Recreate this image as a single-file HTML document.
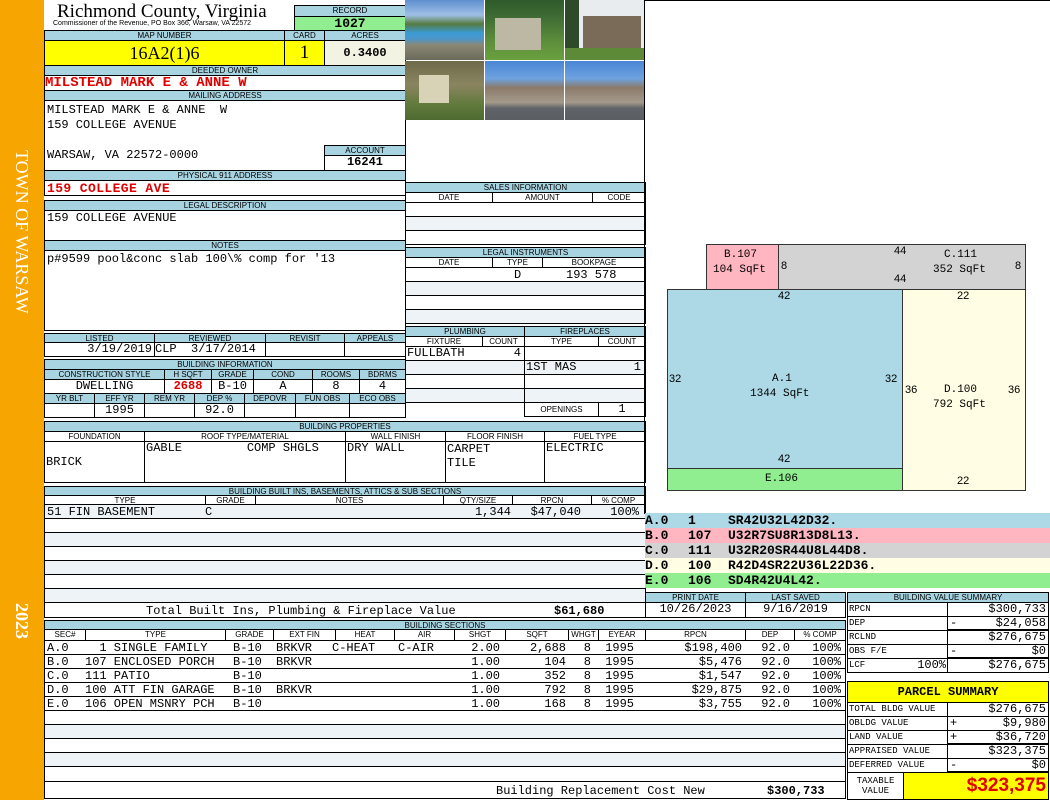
<!DOCTYPE html>
<html><head><meta charset="utf-8">
<style>
*{margin:0;padding:0}
body{width:1050px;height:800px;position:relative;background:#fff;overflow:hidden;font-family:"Liberation Sans",sans-serif}
.b{position:absolute;box-sizing:border-box;border:1px solid #000;overflow:hidden;white-space:nowrap}
.h{background:#a8d4e2;font:8px/9px "Liberation Sans",sans-serif;text-align:center;color:#000}
.v{font:12px/13px "Liberation Mono",monospace;background:#fff;padding:0 2px}
.s{background:#eef3f7}
.c{text-align:center}.r{text-align:right}
.red{color:#e00000}
.a{position:absolute;white-space:pre}
.m{font:12px/13px "Liberation Mono",monospace}
.bd{font-weight:bold !important}
.sk{font:11px "Liberation Mono",monospace;position:absolute;white-space:nowrap}
.d{font:11px "Liberation Sans",sans-serif;position:absolute;color:#000}
.row span{position:absolute;top:1px;font:12px/13px "Liberation Mono",monospace;white-space:pre}
</style></head><body>
<div style="position:absolute;left:0;top:0;width:44px;height:800px;background:#f7a500"></div>
<div class="a" style="left:10px;top:150px;transform-origin:0 0;transform:translate(22px,0) rotate(90deg);font:18px 'Liberation Serif',serif;color:#fff">TOWN OF WARSAW</div>
<div class="a" style="left:10px;top:603px;transform-origin:0 0;transform:translate(22px,0) rotate(90deg);font:bold 18px 'Liberation Serif',serif;color:#fff">2023</div>

<div class="a" style="left:57px;top:1px;font:19px/22px 'Liberation Serif',serif">Richmond County, Virginia</div>
<div class="a" style="left:53px;top:20px;font:7px/8px 'Liberation Sans',sans-serif">Commissioner of the Revenue, PO Box 366, Warsaw, VA 22572</div>

<div class="b h" style="left:294px;top:5px;width:112px;height:12px">RECORD</div>
<div class="b v c bd" style="left:294px;top:16px;width:112px;height:15px;background:#90ee90;font-size:13px">1027</div>
<div class="b h" style="left:44px;top:30px;width:241px;height:11px">MAP NUMBER</div>
<div class="b h" style="left:284px;top:30px;width:41px;height:11px">CARD</div>
<div class="b h" style="left:324px;top:30px;width:82px;height:11px">ACRES</div>
<div class="b c" style="left:44px;top:40px;width:241px;height:26px;background:#ffff00;font:18px/24px 'Liberation Serif',serif">16A2(1)6</div>
<div class="b c" style="left:284px;top:40px;width:41px;height:26px;background:#ffff00;font:19px/24px 'Liberation Serif',serif">1</div>
<div class="b v c bd" style="left:324px;top:40px;width:82px;height:26px;background:#f3f3e4;line-height:24px">0.3400</div>

<div class="b h" style="left:44px;top:65px;width:362px;height:11px">DEEDED OWNER</div>
<div class="b v bd red" style="left:44px;top:75px;width:362px;height:16px;padding:0;font-size:14px;line-height:15px">MILSTEAD MARK E &amp; ANNE W</div>
<div class="b h" style="left:44px;top:90px;width:362px;height:11px">MAILING ADDRESS</div>
<div class="b v" style="left:44px;top:100px;width:362px;height:71px;line-height:15px;padding-top:2px;white-space:pre">MILSTEAD MARK E &amp; ANNE  W
159 COLLEGE AVENUE

WARSAW, VA 22572-0000</div>
<div class="b h" style="left:324px;top:145px;width:82px;height:11px">ACCOUNT</div>
<div class="b v c bd" style="left:324px;top:155px;width:82px;height:16px">16241</div>
<div class="b h" style="left:44px;top:170px;width:362px;height:11px">PHYSICAL 911 ADDRESS</div>
<div class="b v bd red" style="left:44px;top:180px;width:362px;height:16px;font-size:13px;letter-spacing:0.4px;line-height:15px">159 COLLEGE AVE</div>
<div class="b h" style="left:44px;top:200px;width:362px;height:11px">LEGAL DESCRIPTION</div>
<div class="b v" style="left:44px;top:210px;width:362px;height:31px;padding-top:1px">159 COLLEGE AVENUE</div>
<div class="b h" style="left:44px;top:240px;width:362px;height:11px">NOTES</div>
<div class="b v" style="left:44px;top:250px;width:362px;height:81px;padding-top:2px">p#9599 pool&amp;conc slab 100\% comp for '13</div>

<div class="b h" style="left:44px;top:333px;width:111px;height:10px">LISTED</div>
<div class="b h" style="left:154px;top:333px;width:112px;height:10px">REVIEWED</div>
<div class="b h" style="left:265px;top:333px;width:80px;height:10px">REVISIT</div>
<div class="b h" style="left:344px;top:333px;width:62px;height:10px">APPEALS</div>
<div class="b v r" style="left:44px;top:342px;width:111px;height:15px">3/19/2019</div>
<div class="b v" style="left:154px;top:342px;width:112px;height:15px;white-space:pre;padding:0">CLP  3/17/2014</div>
<div class="b v" style="left:265px;top:342px;width:80px;height:15px"></div>
<div class="b v" style="left:344px;top:342px;width:62px;height:15px"></div>

<div class="b h" style="left:44px;top:359px;width:362px;height:11px">BUILDING INFORMATION</div>
<div class="b h" style="left:44px;top:369px;width:121px;height:11px">CONSTRUCTION STYLE</div>
<div class="b h" style="left:164px;top:369px;width:48px;height:11px">H SQFT</div>
<div class="b h" style="left:211px;top:369px;width:43px;height:11px">GRADE</div>
<div class="b h" style="left:253px;top:369px;width:60px;height:11px">COND</div>
<div class="b h" style="left:312px;top:369px;width:48px;height:11px">ROOMS</div>
<div class="b h" style="left:359px;top:369px;width:47px;height:11px">BDRMS</div>
<div class="b v c" style="left:44px;top:379px;width:121px;height:15px">DWELLING</div>
<div class="b v c bd red" style="left:164px;top:379px;width:48px;height:15px">2688</div>
<div class="b v c" style="left:211px;top:379px;width:43px;height:15px;padding:0">B-10</div>
<div class="b v c" style="left:253px;top:379px;width:60px;height:15px">A</div>
<div class="b v c" style="left:312px;top:379px;width:48px;height:15px">8</div>
<div class="b v c" style="left:359px;top:379px;width:47px;height:15px">4</div>
<div class="b h" style="left:44px;top:393px;width:51px;height:11px">YR BLT</div>
<div class="b h" style="left:94px;top:393px;width:51px;height:11px">EFF YR</div>
<div class="b h" style="left:144px;top:393px;width:51px;height:11px">REM YR</div>
<div class="b h" style="left:194px;top:393px;width:51px;height:11px">DEP %</div>
<div class="b h" style="left:244px;top:393px;width:52px;height:11px">DEPOVR</div>
<div class="b h" style="left:295px;top:393px;width:55px;height:11px">FUN OBS</div>
<div class="b h" style="left:349px;top:393px;width:57px;height:11px">ECO OBS</div>
<div class="b v" style="left:44px;top:403px;width:51px;height:15px"></div>
<div class="b v c" style="left:94px;top:403px;width:51px;height:15px">1995</div>
<div class="b v" style="left:144px;top:403px;width:51px;height:15px"></div>
<div class="b v c" style="left:194px;top:403px;width:51px;height:15px">92.0</div>
<div class="b v" style="left:244px;top:403px;width:52px;height:15px"></div>
<div class="b v" style="left:295px;top:403px;width:55px;height:15px"></div>
<div class="b v" style="left:349px;top:403px;width:57px;height:15px"></div>

<div style="position:absolute;left:405px;top:0;width:79px;height:60px;background:linear-gradient(#5f8fd0 0,#9fc0e6 25%,#557a40 40%,#3b9bd6 55%,#4c95c8 65%,#8b8775 75%,#6a6a5a 100%)"></div>
<div style="position:absolute;left:485px;top:0;width:79px;height:60px;background:linear-gradient(#2f5a2a 0,#3f6d34 30%,#5e8f3c 70%,#6aa03f 100%)"><div style="position:absolute;left:10px;top:18px;width:46px;height:32px;background:#bdb8a4"></div></div>
<div style="position:absolute;left:565px;top:0;width:79px;height:60px;background:linear-gradient(90deg,#2e4a2a 0,#2e4a2a 18%,#e8ecef 18%);"><div style="position:absolute;left:18px;top:16px;width:58px;height:34px;background:#7a6a58"></div><div style="position:absolute;left:0;top:48px;width:79px;height:12px;background:#5d8a36"></div></div>
<div style="position:absolute;left:405px;top:61px;width:79px;height:59px;background:linear-gradient(#6d6a4a 0,#8a8460 40%,#5f7a3a 75%,#4f6a30 100%)"><div style="position:absolute;left:14px;top:14px;width:30px;height:28px;background:#d8d2b6"></div></div>
<div style="position:absolute;left:485px;top:61px;width:79px;height:59px;background:linear-gradient(#4a86d4 0,#6ea2e0 30%,#8a7a6a 45%,#a49a8a 70%,#606468 80%,#5a5e62 100%)"></div>
<div style="position:absolute;left:565px;top:61px;width:79px;height:59px;background:linear-gradient(#4a86d4 0,#6ea2e0 30%,#8a7a6a 45%,#a49a8a 70%,#606468 80%,#5a5e62 100%)"></div>

<div class="b h" style="left:405px;top:182px;width:241px;height:11px">SALES INFORMATION</div>
<div class="b h" style="left:405px;top:192px;width:88px;height:11px;background:#fff">DATE</div>
<div class="b h" style="left:492px;top:192px;width:101px;height:11px;background:#fff">AMOUNT</div>
<div class="b h" style="left:592px;top:192px;width:54px;height:11px;background:#fff">CODE</div>
<div class="b v" style="left:405px;top:202px;width:241px;height:15px"></div>
<div class="b v s" style="left:405px;top:216px;width:241px;height:15px"></div>
<div class="b v" style="left:405px;top:230px;width:241px;height:15px"></div>
<div class="b h" style="left:405px;top:247px;width:241px;height:11px">LEGAL INSTRUMENTS</div>
<div class="b h" style="left:405px;top:257px;width:88px;height:11px;background:#fff">DATE</div>
<div class="b h" style="left:492px;top:257px;width:51px;height:11px;background:#fff">TYPE</div>
<div class="b h" style="left:542px;top:257px;width:104px;height:11px;background:#fff">BOOKPAGE</div>
<div class="b v" style="left:405px;top:267px;width:241px;height:15px"><span class="a m" style="left:108px;top:1px">D</span><span class="a m" style="left:160px;top:1px">193 578</span></div>
<div class="b v s" style="left:405px;top:281px;width:241px;height:15px"></div>
<div class="b v" style="left:405px;top:295px;width:241px;height:15px"></div>
<div class="b v s" style="left:405px;top:309px;width:241px;height:15px"></div>

<div class="b h" style="left:405px;top:326px;width:120px;height:11px">PLUMBING</div>
<div class="b h" style="left:524px;top:326px;width:122px;height:11px">FIREPLACES</div>
<div class="b h" style="left:405px;top:336px;width:78px;height:11px;background:#fff">FIXTURE</div>
<div class="b h" style="left:482px;top:336px;width:43px;height:11px;background:#fff">COUNT</div>
<div class="b h" style="left:524px;top:336px;width:75px;height:11px;background:#fff">TYPE</div>
<div class="b h" style="left:598px;top:336px;width:48px;height:11px;background:#fff">COUNT</div>
<div class="b v" style="left:405px;top:346px;width:120px;height:15px;padding:0 3px 0 1px">FULLBATH<span style="float:right">4</span></div>
<div class="b v s" style="left:405px;top:360px;width:120px;height:15px"></div>
<div class="b v" style="left:405px;top:374px;width:120px;height:15px"></div>
<div class="b v s" style="left:405px;top:388px;width:120px;height:15px"></div>
<div class="b v" style="left:524px;top:346px;width:122px;height:15px"></div>
<div class="b v s" style="left:524px;top:360px;width:122px;height:15px;padding:0 4px 0 1px">1ST MAS<span style="float:right">1</span></div>
<div class="b v" style="left:524px;top:374px;width:122px;height:15px"></div>
<div class="b v s" style="left:524px;top:388px;width:122px;height:15px"></div>
<div class="b h" style="left:524px;top:402px;width:75px;height:15px;background:#fff;line-height:13px">OPENINGS</div>
<div class="b v c" style="left:598px;top:402px;width:48px;height:15px">1</div>

<div class="b h" style="left:44px;top:421px;width:602px;height:11px">BUILDING PROPERTIES</div>
<div class="b h" style="left:44px;top:431px;width:101px;height:11px;background:#fff">FOUNDATION</div>
<div class="b h" style="left:144px;top:431px;width:202px;height:11px;background:#fff">ROOF TYPE/MATERIAL</div>
<div class="b h" style="left:345px;top:431px;width:101px;height:11px;background:#fff">WALL FINISH</div>
<div class="b h" style="left:445px;top:431px;width:100px;height:11px;background:#fff">FLOOR FINISH</div>
<div class="b h" style="left:544px;top:431px;width:102px;height:11px;background:#fff">FUEL TYPE</div>
<div class="b v" style="left:44px;top:441px;width:101px;height:42px;padding:14px 1px 0">BRICK</div>
<div class="b v" style="left:144px;top:441px;width:202px;height:42px;padding:0 1px;white-space:pre">GABLE         COMP SHGLS</div>
<div class="b v" style="left:345px;top:441px;width:101px;height:42px;padding:0 1px">DRY WALL</div>
<div class="b v" style="left:445px;top:441px;width:100px;height:42px;padding:0 1px;white-space:pre;line-height:14px">CARPET
TILE</div>
<div class="b v" style="left:544px;top:441px;width:102px;height:42px;padding:0 1px">ELECTRIC</div>

<div class="b h" style="left:44px;top:486px;width:602px;height:10px">BUILDING BUILT INS, BASEMENTS, ATTICS &amp; SUB SECTIONS</div>
<div class="b h" style="left:44px;top:495px;width:162px;height:10px;background:#fff">TYPE</div>
<div class="b h" style="left:205px;top:495px;width:51px;height:10px;background:#fff">GRADE</div>
<div class="b h" style="left:255px;top:495px;width:189px;height:10px;background:#fff">NOTES</div>
<div class="b h" style="left:443px;top:495px;width:70px;height:10px;background:#fff">QTY/SIZE</div>
<div class="b h" style="left:512px;top:495px;width:80px;height:10px;background:#fff">RPCN</div>
<div class="b h" style="left:591px;top:495px;width:55px;height:10px;background:#fff">% COMP</div>
<div class="b v s row" style="left:44px;top:504px;width:602px;height:15px;padding:0"><span style="left:2px">51 FIN BASEMENT</span><span style="left:160px">C</span><span style="right:134px">1,344</span><span style="right:64px">$47,040</span><span style="right:6px">100%</span></div>
<div class="b v" style="left:44px;top:518px;width:602px;height:15px"></div>
<div class="b v s" style="left:44px;top:532px;width:602px;height:15px"></div>
<div class="b v" style="left:44px;top:546px;width:602px;height:15px"></div>
<div class="b v s" style="left:44px;top:560px;width:602px;height:15px"></div>
<div class="b v" style="left:44px;top:574px;width:602px;height:15px"></div>
<div class="b v s" style="left:44px;top:588px;width:602px;height:15px"></div>
<div class="b v row" style="left:44px;top:602px;width:602px;height:16px;padding:0"><span style="left:101px;top:2px">Total Built Ins, Plumbing &amp; Fireplace Value</span><span style="left:509px;top:2px;font-weight:bold">$61,680</span></div>

<div class="b h" style="left:44px;top:620px;width:802px;height:10px">BUILDING SECTIONS</div>
<div class="b h" style="left:44px;top:629px;width:42px;height:12px;background:#fff">SEC#</div>
<div class="b h" style="left:85px;top:629px;width:141px;height:12px;background:#fff">TYPE</div>
<div class="b h" style="left:225px;top:629px;width:49px;height:12px;background:#fff">GRADE</div>
<div class="b h" style="left:273px;top:629px;width:63px;height:12px;background:#fff">EXT FIN</div>
<div class="b h" style="left:335px;top:629px;width:60px;height:12px;background:#fff">HEAT</div>
<div class="b h" style="left:394px;top:629px;width:61px;height:12px;background:#fff">AIR</div>
<div class="b h" style="left:454px;top:629px;width:52px;height:12px;background:#fff">SHGT</div>
<div class="b h" style="left:505px;top:629px;width:64px;height:12px;background:#fff">SQFT</div>
<div class="b h" style="left:568px;top:629px;width:31px;height:12px;background:#fff">WHGT</div>
<div class="b h" style="left:598px;top:629px;width:48px;height:12px;background:#fff">EYEAR</div>
<div class="b h" style="left:645px;top:629px;width:101px;height:12px;background:#fff">RPCN</div>
<div class="b h" style="left:745px;top:629px;width:50px;height:12px;background:#fff">DEP</div>
<div class="b h" style="left:794px;top:629px;width:52px;height:12px;background:#fff">% COMP</div>

<div class="b v row" style="left:44px;top:640px;width:802px;height:15px;padding:0"><span style="left:2px">A.0</span><span style="left:40px">  1 SINGLE FAMILY</span><span style="left:188px">B-10</span><span style="left:231px">BRKVR</span><span style="left:287px">C-HEAT</span><span style="left:353px">C-AIR</span><span style="right:345px">2.00</span><span style="right:279px">2,688</span><span style="right:254px">8</span><span style="right:211px">1995</span><span style="right:103px">$198,400</span><span style="right:55px">92.0</span><span style="right:4px">100%</span></div>
<div class="b v row" style="left:44px;top:654px;width:802px;height:15px;padding:0"><span style="left:2px">B.0</span><span style="left:40px">107 ENCLOSED PORCH</span><span style="left:188px">B-10</span><span style="left:231px">BRKVR</span><span style="right:345px">1.00</span><span style="right:279px">104</span><span style="right:254px">8</span><span style="right:211px">1995</span><span style="right:103px">$5,476</span><span style="right:55px">92.0</span><span style="right:4px">100%</span></div>
<div class="b v row" style="left:44px;top:668px;width:802px;height:15px;padding:0"><span style="left:2px">C.0</span><span style="left:40px">111 PATIO</span><span style="left:188px">B-10</span><span style="right:345px">1.00</span><span style="right:279px">352</span><span style="right:254px">8</span><span style="right:211px">1995</span><span style="right:103px">$1,547</span><span style="right:55px">92.0</span><span style="right:4px">100%</span></div>
<div class="b v row" style="left:44px;top:682px;width:802px;height:15px;padding:0"><span style="left:2px">D.0</span><span style="left:40px">100 ATT FIN GARAGE</span><span style="left:188px">B-10</span><span style="left:231px">BRKVR</span><span style="right:345px">1.00</span><span style="right:279px">792</span><span style="right:254px">8</span><span style="right:211px">1995</span><span style="right:103px">$29,875</span><span style="right:55px">92.0</span><span style="right:4px">100%</span></div>
<div class="b v row" style="left:44px;top:696px;width:802px;height:15px;padding:0"><span style="left:2px">E.0</span><span style="left:40px">106 OPEN MSNRY PCH</span><span style="left:188px">B-10</span><span style="right:345px">1.00</span><span style="right:279px">168</span><span style="right:254px">8</span><span style="right:211px">1995</span><span style="right:103px">$3,755</span><span style="right:55px">92.0</span><span style="right:4px">100%</span></div>
<div class="b v" style="left:44px;top:710px;width:802px;height:15px"></div>
<div class="b v s" style="left:44px;top:724px;width:802px;height:15px"></div>
<div class="b v" style="left:44px;top:738px;width:802px;height:15px"></div>
<div class="b v s" style="left:44px;top:752px;width:802px;height:15px"></div>
<div class="b v" style="left:44px;top:766px;width:802px;height:16px"></div>
<div class="b v row" style="left:44px;top:781px;width:802px;height:18px;padding:0"><span style="left:451px;top:3px">Building Replacement Cost New</span><span style="left:722px;top:3px;font-weight:bold">$300,733</span></div>

<div class="b" style="left:644px;top:0;width:406px;height:514px;border-width:1px 0 1px 1px"></div>
<div class="b" style="left:706px;top:244px;width:73px;height:46px;background:#ffb6c1;border-color:#333"></div>
<div class="b" style="left:778px;top:244px;width:248px;height:46px;background:#d3d3d3;border-color:#333"></div>
<div class="b" style="left:667px;top:289px;width:236px;height:180px;background:#add8e6;border-color:#333"></div>
<div class="b" style="left:667px;top:468px;width:236px;height:23px;background:#90ee90;border-color:#333"></div>
<div class="b" style="left:902px;top:289px;width:124px;height:202px;background:#fffde3;border-color:#333"></div>
<div class="sk" style="left:724px;top:249px">B.107</div>
<div class="sk" style="left:713px;top:264px">104 SqFt</div>
<div class="d" style="left:781px;top:260px">8</div>
<div class="d" style="left:894px;top:245px">44</div>
<div class="d" style="left:894px;top:273px">44</div>
<div class="sk" style="left:944px;top:249px">C.111</div>
<div class="sk" style="left:933px;top:264px">352 SqFt</div>
<div class="d" style="left:1015px;top:260px">8</div>
<div class="d" style="left:778px;top:290px">42</div>
<div class="d" style="left:957px;top:290px">22</div>
<div class="d" style="left:669px;top:373px">32</div>
<div class="d" style="left:885px;top:373px">32</div>
<div class="sk" style="left:772px;top:373px">A.1</div>
<div class="sk" style="left:750px;top:388px">1344 SqFt</div>
<div class="d" style="left:905px;top:384px">36</div>
<div class="d" style="left:1008px;top:384px">36</div>
<div class="sk" style="left:944px;top:384px">D.100</div>
<div class="sk" style="left:933px;top:399px">792 SqFt</div>
<div class="d" style="left:778px;top:453px">42</div>
<div class="sk" style="left:765px;top:473px">E.106</div>
<div class="d" style="left:957px;top:475px">22</div>

<div class="a" style="left:645px;top:513px;width:405px;height:75px;font:bold 13px/15px 'Liberation Mono',monospace"><div style="position:relative;background:#add8e6;height:15px"><span class="a" style="left:0">A.0</span><span class="a" style="left:43px">1</span><span class="a" style="left:83px">SR42U32L42D32.</span></div><div style="position:relative;background:#ffb6c1;height:15px"><span class="a" style="left:0">B.0</span><span class="a" style="left:43px">107</span><span class="a" style="left:83px">U32R7SU8R13D8L13.</span></div><div style="position:relative;background:#d3d3d3;height:15px"><span class="a" style="left:0">C.0</span><span class="a" style="left:43px">111</span><span class="a" style="left:83px">U32R20SR44U8L44D8.</span></div><div style="position:relative;background:#fffde3;height:15px"><span class="a" style="left:0">D.0</span><span class="a" style="left:43px">100</span><span class="a" style="left:83px">R42D4SR22U36L22D36.</span></div><div style="position:relative;background:#90ee90;height:15px"><span class="a" style="left:0">E.0</span><span class="a" style="left:43px">106</span><span class="a" style="left:83px">SD4R42U4L42.</span></div></div>

<div class="b h" style="left:645px;top:592px;width:101px;height:11px">PRINT DATE</div>
<div class="b h" style="left:745px;top:592px;width:101px;height:11px">LAST SAVED</div>
<div class="b v c" style="left:645px;top:602px;width:101px;height:16px">10/26/2023</div>
<div class="b v c" style="left:745px;top:602px;width:101px;height:16px">9/16/2019</div>

<div class="b h" style="left:847px;top:592px;width:202px;height:11px">BUILDING VALUE SUMMARY</div>
<div class="b v" style="left:847px;top:602px;width:101px;height:15px;font-size:9px;padding:0 1px">RPCN</div>
<div class="b v r" style="left:947px;top:602px;width:102px;height:15px">$300,733</div>
<div class="b v" style="left:847px;top:616px;width:101px;height:15px;font-size:9px;padding:0 1px">DEP</div>
<div class="b v" style="left:947px;top:616px;width:102px;height:15px;border-bottom-width:2px">-<span style="float:right">$24,058</span></div>
<div class="b v" style="left:847px;top:630px;width:101px;height:15px;font-size:9px;padding:0 1px">RCLND</div>
<div class="b v r" style="left:947px;top:630px;width:102px;height:15px">$276,675</div>
<div class="b v" style="left:847px;top:644px;width:101px;height:15px;font-size:9px;padding:0 1px">OBS F/E</div>
<div class="b v" style="left:947px;top:644px;width:102px;height:15px;border-bottom-width:2px">-<span style="float:right">$0</span></div>
<div class="b v" style="left:847px;top:658px;width:101px;height:15px;font-size:9px;padding:0 1px">LCF<span style="float:right;font-size:12px">100%</span></div>
<div class="b v r" style="left:947px;top:658px;width:102px;height:15px">$276,675</div>

<div class="b c" style="left:847px;top:681px;width:202px;height:22px;background:#ffff00;font:bold 12px/20px 'Liberation Mono',monospace">PARCEL  SUMMARY</div>
<div class="b v" style="left:847px;top:702px;width:101px;height:15px;font-size:9px;padding:0 1px">TOTAL BLDG VALUE</div>
<div class="b v r" style="left:947px;top:702px;width:102px;height:15px">$276,675</div>
<div class="b v" style="left:847px;top:716px;width:101px;height:15px;font-size:9px;padding:0 1px">OBLDG VALUE</div>
<div class="b v" style="left:947px;top:716px;width:102px;height:15px">+<span style="float:right">$9,980</span></div>
<div class="b v" style="left:847px;top:730px;width:101px;height:15px;font-size:9px;padding:0 1px">LAND VALUE</div>
<div class="b v" style="left:947px;top:730px;width:102px;height:15px;border-bottom-width:2px">+<span style="float:right">$36,720</span></div>
<div class="b v" style="left:847px;top:744px;width:101px;height:15px;font-size:9px;padding:0 1px">APPRAISED VALUE</div>
<div class="b v r" style="left:947px;top:744px;width:102px;height:15px">$323,375</div>
<div class="b v" style="left:847px;top:758px;width:101px;height:15px;font-size:9px;padding:0 1px">DEFERRED VALUE</div>
<div class="b v" style="left:947px;top:758px;width:102px;height:15px;border-bottom-width:2px">-<span style="float:right">$0</span></div>
<div class="b v c" style="left:847px;top:772px;width:57px;height:28px;font-size:9px;line-height:10px;padding-top:3px;white-space:pre">TAXABLE
VALUE</div>
<div class="b r bd red" style="left:903px;top:772px;width:146px;height:28px;background:#ffff00;font:bold 19px/26px 'Liberation Sans',sans-serif;padding-right:2px">$323,375</div>
</body></html>
